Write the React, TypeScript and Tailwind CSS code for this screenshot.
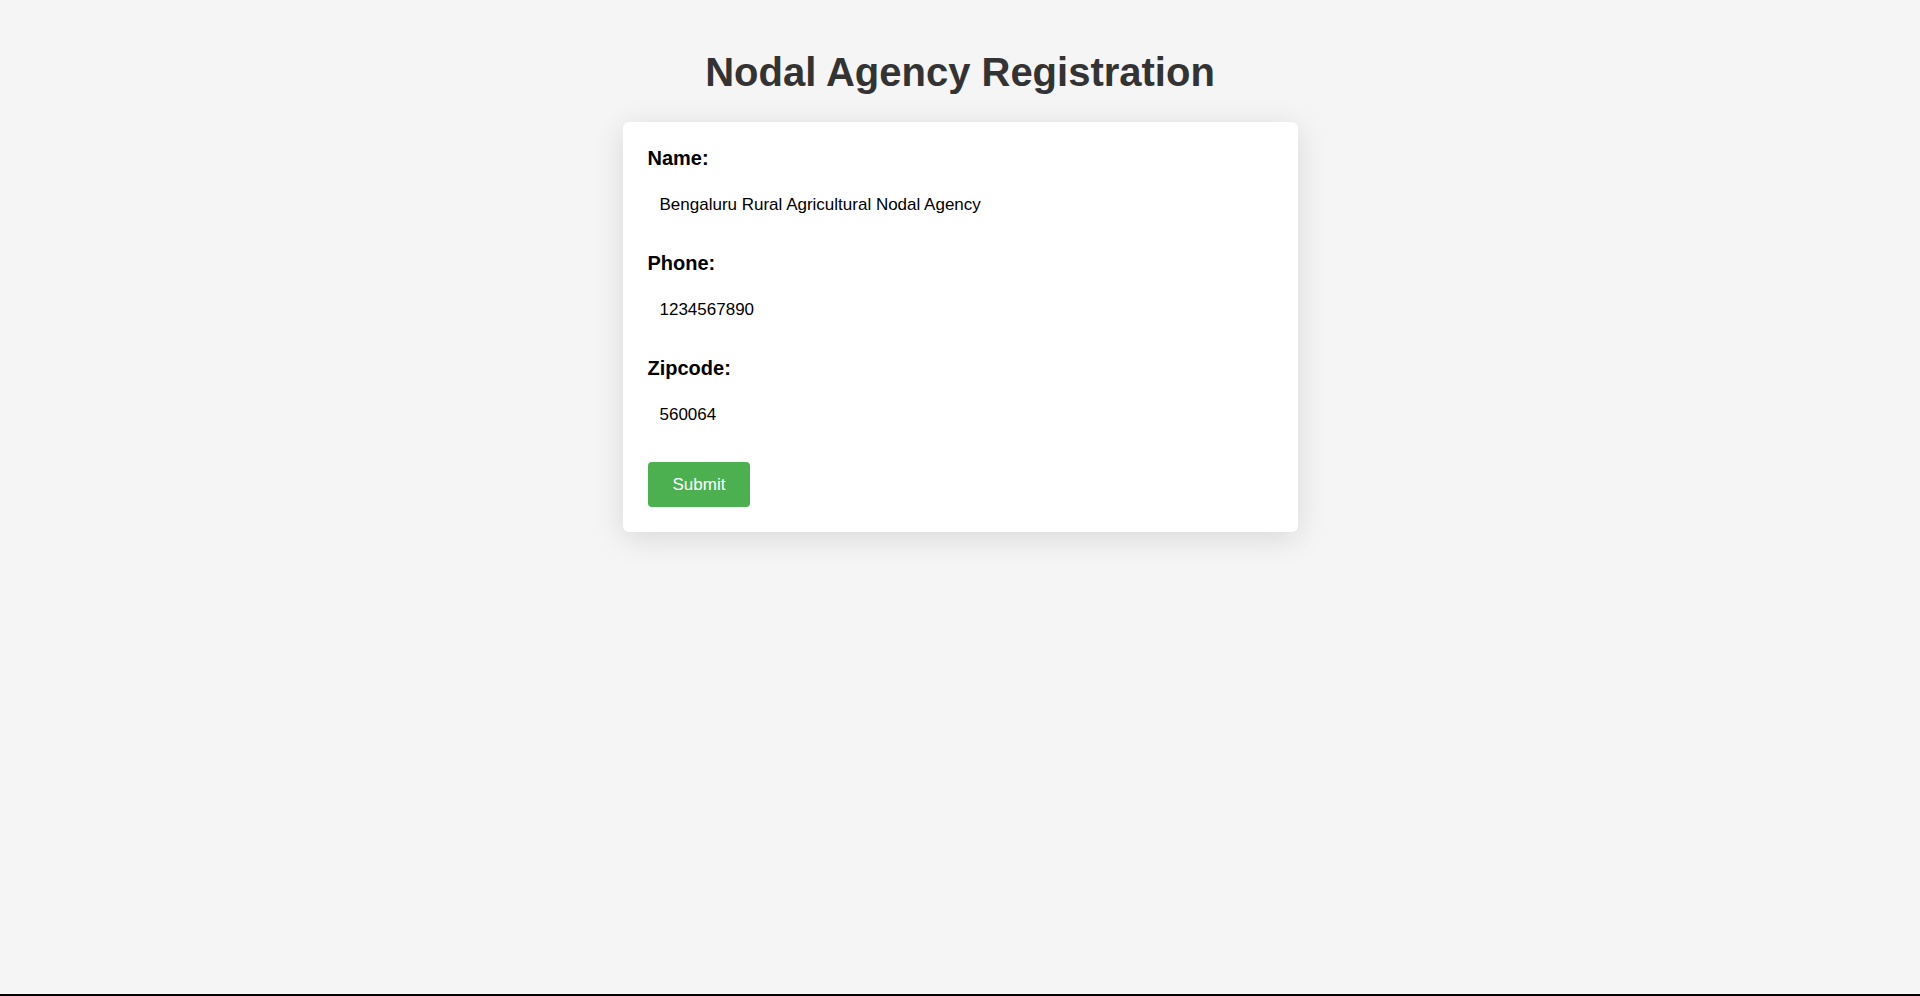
import { useState } from 'react';

const fields = [
  { id: 'name', label: 'Name:', type: 'text', initial: 'Bengaluru Rural Agricultural Nodal Agency' },
  { id: 'phone', label: 'Phone:', type: 'tel', initial: '1234567890' },
  { id: 'zipcode', label: 'Zipcode:', type: 'text', initial: '560064' },
];

export default function App() {
  const [values, setValues] = useState<Record<string, string>>(
    Object.fromEntries(fields.map((f) => [f.id, f.initial])),
  );

  return (
    <main className="flex min-h-screen flex-col items-center border-b-2 border-black bg-[#f5f5f5] px-6 py-12 font-['Liberation_Sans',Arial,sans-serif]">
      <h1 className="mb-[26px] text-center text-[40px] leading-[48px] font-bold text-[#333]">
        Nodal Agency Registration
      </h1>
      <form
        onSubmit={(e) => e.preventDefault()}
        className="w-full max-w-[675px] rounded-md bg-white p-[25px] shadow-[0_6px_31px_rgba(0,0,0,0.12)]"
      >
        {fields.map((f) => (
          <div key={f.id} className="mb-[25px] flex flex-col gap-3">
            <label htmlFor={f.id} className="text-xl leading-[23px] font-bold text-black">
              {f.label}
            </label>
            <input
              id={f.id}
              type={f.type}
              value={values[f.id]}
              onChange={(e) => setValues({ ...values, [f.id]: e.target.value })}
              className="h-[45px] w-full rounded-sm bg-white px-3 text-[17px] text-black outline-none"
            />
          </div>
        ))}
        <button
          type="submit"
          className="h-[45px] cursor-pointer rounded-sm bg-[#4caf50] px-[25px] text-[17px] text-white"
        >
          Submit
        </button>
      </form>
    </main>
  );
}
